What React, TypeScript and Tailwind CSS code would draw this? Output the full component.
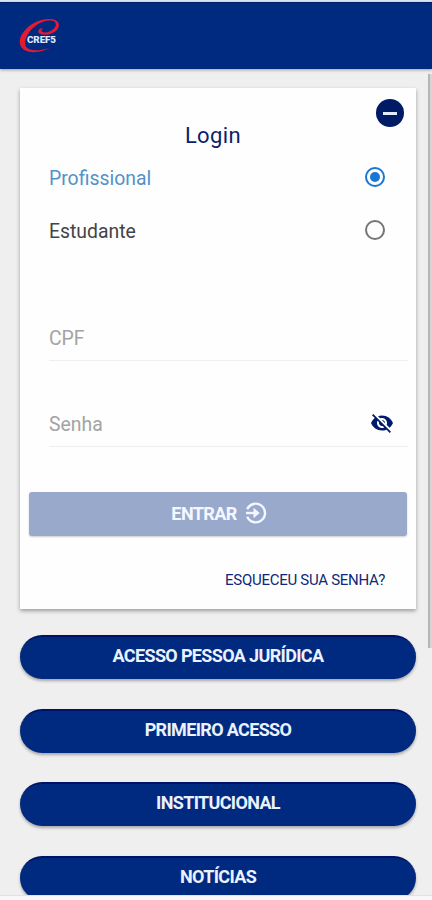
import { useState } from 'react';
import { MdVisibilityOff } from 'react-icons/md';

const links = [
  'ACESSO PESSOA JURÍDICA',
  'PRIMEIRO ACESSO',
  'INSTITUCIONAL',
  'NOTÍCIAS',
];

const Logo = () => (
  <svg width="42" height="36" viewBox="0 0 42 36" aria-label="CREF5">
    <path
      d="M19.500 14.500C22 18 33 17.500 38 12C42 6.500 39.500 1.500 32 1C20 .3 8 7 2.500 17C-1 24 .5 31 9 33.500C15 35 25 34 31 29.500C24 32.500 15 33.300 10 31C4.500 28.500 5.500 22.500 8.500 17C13 9 22 2.800 31 2.600C37 2.600 38.500 6.500 35 10.500C31 14.500 25 15.300 23 13.600C21.800 12.500 22.800 11 24 10.300C21 9.800 18.500 12 19.500 14.500Z"
      fill="#e31b32"
    />
    <text
      x="8"
      y="25.200"
      fill="#dce8ff"
      fontFamily="Roboto, sans-serif"
      fontSize="9.800"
      fontWeight="900"
      textLength="29"
    >
      CREF5
    </text>
  </svg>
);

const LogInIcon = () => (
  <svg
    width="22"
    height="22"
    viewBox="0 0 22 22"
    fill="none"
    stroke="#f4f7ff"
    strokeWidth="2.400"
  >
    <path d="M2.200 7.300A9.300 9.300 0 1 1 2.200 14.700" />
    <path d="M1 11H12" />
    <path d="M8.500 5.800L14.800 11L8.500 16.200Z" fill="#f4f7ff" stroke="none" />
  </svg>
);

const RadioMark = ({ checked }: { checked: boolean }) => (
  <span
    className={`mb-[3px] flex size-5 items-center justify-center rounded-full border-2 ${
      checked ? 'border-[#1976d2]' : 'border-[#757575]'
    }`}
  >
    {checked && <span className="size-2.5 rounded-full bg-[#1976d2]" />}
  </span>
);

const App = () => {
  const [profile, setProfile] = useState('Profissional');

  return (
    <div className="flex h-[900px] w-[432px] flex-col overflow-hidden bg-[#efefef] font-[Roboto,sans-serif]">
      <div className="h-0.5 shrink-0 bg-[#dce6f7]" />
      <header className="flex h-[67px] shrink-0 items-center border-t border-[#001a66] bg-[#002a80] pl-[19px] shadow-[0_1px_3px_rgba(0,0,0,0.35)]">
        <Logo />
      </header>

      <div className="flex min-h-0 flex-1 justify-between overflow-hidden">
        <main className="ml-5 w-[396px] pt-[19px]">
          <section className="h-[521px] bg-[#fefefe] pt-[11px] shadow-[0_2px_4px_rgba(0,0,0,0.35)]">
            <div className="flex justify-end pr-3">
              <button className="flex size-7 items-center justify-center rounded-full bg-[#001a66]">
                <span className="h-[3px] w-3.5 bg-[#e3ebff]" />
              </button>
            </div>
            <h1 className="-mt-1 pr-2.5 text-center text-[22px] leading-[26px] tracking-[0.4px] text-[#0b2269]">
              Login
            </h1>

            <div className="mt-[3px] flex flex-col pr-[31px] pl-[29px]">
              {['Profissional', 'Estudante'].map((name) => (
                <button
                  key={name}
                  onClick={() => setProfile(name)}
                  className="flex h-[53px] items-center justify-between text-[19.400px]"
                >
                  <span
                    className={
                      profile === name ? 'text-[#5292c8]' : 'text-[#444444]'
                    }
                  >
                    {name}
                  </span>
                  <RadioMark checked={profile === name} />
                </button>
              ))}
            </div>

            <div className="mt-[60px] ml-[29px] mr-2 flex h-[43px] border-b border-[#eeeeee]">
              <input
                placeholder="CPF"
                className="w-full text-[19.400px] outline-none placeholder:text-[#a3a3a3]"
              />
            </div>
            <div className="mt-[43px] ml-[29px] mr-2 flex h-[43px] items-center border-b border-[#eeeeee]">
              <input
                type="password"
                placeholder="Senha"
                className="w-full text-[19.400px] outline-none placeholder:text-[#a3a3a3]"
              />
              <MdVisibilityOff
                size={24}
                className="mr-3.5 mb-1 shrink-0 text-[#001a6e]"
              />
            </div>

            <button className="mt-[45px] ml-[9px] flex h-11 w-[378px] items-center justify-center gap-2 rounded-[3px] bg-[#99a9cc] pb-0.5 pl-0.5 text-[18px] font-bold tracking-[-0.6px] text-[#f4f7ff] shadow-[0_1px_2px_rgba(0,0,0,0.2)]">
              ENTRAR
              <LogInIcon />
            </button>
            <div className="mt-8 pr-[31px] text-right text-[15px] leading-6 tracking-[-0.27px] text-[#0c2a78]">
              ESQUECEU SUA SENHA?
            </div>
          </section>

          <nav className="mt-[26px] flex flex-col gap-[29.700px]">
            {links.map((label) => (
              <button
                key={label}
                className="h-11 shrink-0 rounded-full border-t-2 border-[#001466] bg-[#002a80] pb-[5px] text-[18px] font-bold tracking-[-0.65px] text-[#eaf1ff] shadow-[0_2px_3px_rgba(0,0,0,0.3)]"
              >
                {label}
              </button>
            ))}
          </nav>
        </main>

        <div className="mt-[5px] h-[574px] w-1 border-l-2 border-[#b5b5b5] bg-[#d6d6d6]" />
      </div>
      <footer className="h-[5px] shrink-0 border-t border-[#e2e2e2] bg-[#f8f8f8]" />
    </div>
  );
};

export default App;
